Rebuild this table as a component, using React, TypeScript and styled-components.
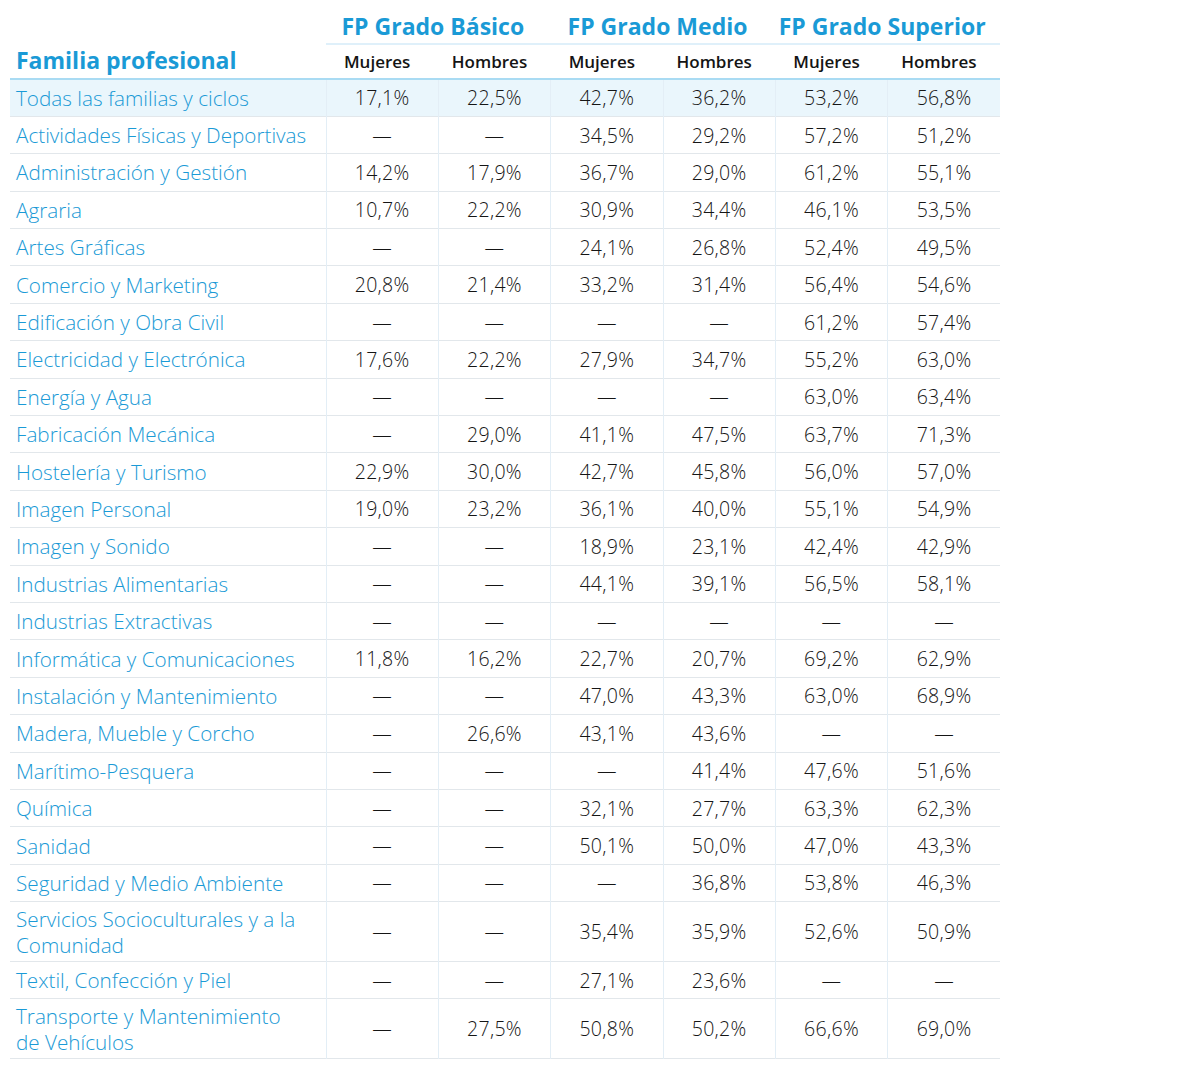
import styled, { createGlobalStyle } from "styled-components";

const GlobalStyle = createGlobalStyle`
  body {
    margin: 0;
    background: #ffffff;
    font-family: "Open Sans", "Noto Sans", "Liberation Sans", sans-serif;
  }
`;

const Page = styled.div`
  padding: 8px 0 0 10px;
`;

const Table = styled.table`
  width: 990px;
  border-collapse: collapse;
  table-layout: fixed;
`;

const GroupTitle = styled.th`
  height: 35px;
  padding: 0 11px 0 0;
  color: #1a9ad6;
  font-size: 23px;
  font-weight: 700;
  text-align: center;
  vertical-align: middle;
  border-bottom: 2px solid #dff0fa;
`;

const CornerCell = styled.th`
  padding: 0 0 0 6px;
  color: #1a9ad6;
  font-size: 23px;
  font-weight: 700;
  text-align: left;
  vertical-align: bottom;
  border-bottom: 2px solid #a9dbf3;
  line-height: 36px;
`;

const SubHead = styled.th`
  height: 33px;
  padding: 0 10px 0 0;
  color: #141414;
  font-size: 17px;
  font-weight: 600;
  text-align: center;
  border-bottom: 2px solid #a9dbf3;
`;

const Row = styled.tr<{ $highlight?: boolean }>`
  height: 37.4px;
  background: ${(p) => (p.$highlight ? "#eaf6fc" : "transparent")};
  border-bottom: 1px solid #e2e7eb;
`;

const NameCell = styled.td`
  padding: 3.5px 0 3.5px 6px;
  color: #1a9ad6;
  font-size: 20.7px;
  font-weight: 300;
  line-height: 26px;
  border-right: 1px solid #e3eef6;
`;

const ValueCell = styled.td`
  padding: 0;
  color: #151515;
  font-size: 19.5px;
  font-weight: 300;
  letter-spacing: 0.3px;
  text-align: center;
  border-right: 1px solid #e3eef6;
  &:last-child {
    border-right: none;
  }
`;

const D = "—";

const rows: [string, string[]][] = [
  ["Todas las familias y ciclos", ["17,1%", "22,5%", "42,7%", "36,2%", "53,2%", "56,8%"]],
  ["Actividades Físicas y Deportivas", [D, D, "34,5%", "29,2%", "57,2%", "51,2%"]],
  ["Administración y Gestión", ["14,2%", "17,9%", "36,7%", "29,0%", "61,2%", "55,1%"]],
  ["Agraria", ["10,7%", "22,2%", "30,9%", "34,4%", "46,1%", "53,5%"]],
  ["Artes Gráficas", [D, D, "24,1%", "26,8%", "52,4%", "49,5%"]],
  ["Comercio y Marketing", ["20,8%", "21,4%", "33,2%", "31,4%", "56,4%", "54,6%"]],
  ["Edificación y Obra Civil", [D, D, D, D, "61,2%", "57,4%"]],
  ["Electricidad y Electrónica", ["17,6%", "22,2%", "27,9%", "34,7%", "55,2%", "63,0%"]],
  ["Energía y Agua", [D, D, D, D, "63,0%", "63,4%"]],
  ["Fabricación Mecánica", [D, "29,0%", "41,1%", "47,5%", "63,7%", "71,3%"]],
  ["Hostelería y Turismo", ["22,9%", "30,0%", "42,7%", "45,8%", "56,0%", "57,0%"]],
  ["Imagen Personal", ["19,0%", "23,2%", "36,1%", "40,0%", "55,1%", "54,9%"]],
  ["Imagen y Sonido", [D, D, "18,9%", "23,1%", "42,4%", "42,9%"]],
  ["Industrias Alimentarias", [D, D, "44,1%", "39,1%", "56,5%", "58,1%"]],
  ["Industrias Extractivas", [D, D, D, D, D, D]],
  ["Informática y Comunicaciones", ["11,8%", "16,2%", "22,7%", "20,7%", "69,2%", "62,9%"]],
  ["Instalación y Mantenimiento", [D, D, "47,0%", "43,3%", "63,0%", "68,9%"]],
  ["Madera, Mueble y Corcho", [D, "26,6%", "43,1%", "43,6%", D, D]],
  ["Marítimo-Pesquera", [D, D, D, "41,4%", "47,6%", "51,6%"]],
  ["Química", [D, D, "32,1%", "27,7%", "63,3%", "62,3%"]],
  ["Sanidad", [D, D, "50,1%", "50,0%", "47,0%", "43,3%"]],
  ["Seguridad y Medio Ambiente", [D, D, D, "36,8%", "53,8%", "46,3%"]],
  ["Servicios Socioculturales y a la Comunidad", [D, D, "35,4%", "35,9%", "52,6%", "50,9%"]],
  ["Textil, Confección y Piel", [D, D, "27,1%", "23,6%", D, D]],
  ["Transporte y Mantenimiento de Vehículos", [D, "27,5%", "50,8%", "50,2%", "66,6%", "69,0%"]],
];

const groups = ["FP Grado Básico", "FP Grado Medio", "FP Grado Superior"];

// names that wrap onto a second line in the original
const breaks: Record<string, [string, string]> = {
  "Servicios Socioculturales y a la Comunidad": ["Servicios Socioculturales y a la", "Comunidad"],
  "Transporte y Mantenimiento de Vehículos": ["Transporte y Mantenimiento", "de Vehículos"],
};

export default function App() {
  return (
    <Page>
      <GlobalStyle />
      <Table>
        <colgroup>
          <col style={{ width: 316 }} />
          {Array.from({ length: 6 }).map((_, i) => (
            <col key={i} style={{ width: 112.33 }} />
          ))}
        </colgroup>
        <thead>
          <tr>
            <CornerCell rowSpan={2}>Familia profesional</CornerCell>
            {groups.map((g) => (
              <GroupTitle key={g} colSpan={2}>
                {g}
              </GroupTitle>
            ))}
          </tr>
          <tr>
            {groups.map((g) => [
              <SubHead key={g + "m"}>Mujeres</SubHead>,
              <SubHead key={g + "h"}>Hombres</SubHead>,
            ])}
          </tr>
        </thead>
        <tbody>
          {rows.map(([name, vals], i) => (
            <Row key={name} $highlight={i === 0}>
              <NameCell>
                {breaks[name] ? (
                  <>
                    {breaks[name][0]}
                    <br />
                    {breaks[name][1]}
                  </>
                ) : (
                  name
                )}
              </NameCell>
              {vals.map((v, j) => (
                <ValueCell key={j}>{v}</ValueCell>
              ))}
            </Row>
          ))}
        </tbody>
      </Table>
    </Page>
  );
}
